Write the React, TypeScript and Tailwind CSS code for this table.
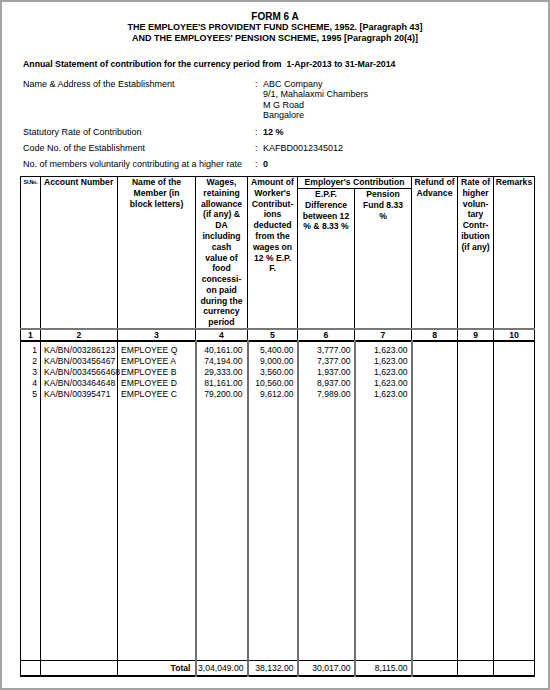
const rows = [
  ['1', 'KA/BN/003286123', 'EMPLOYEE Q', '40,161.00', '5,400.00', '3,777.00', '1,623.00'],
  ['2', 'KA/BN/003456467', 'EMPLOYEE A', '74,194.00', '9,000.00', '7,377.00', '1,623.00'],
  ['3', 'KA/BN/0034566468', 'EMPLOYEE B', '29,333.00', '3,560.00', '1,937.00', '1,623.00'],
  ['4', 'KA/BN/003464648', 'EMPLOYEE D', '81,161.00', '10,560.00', '8,937.00', '1,623.00'],
  ['5', 'KA/BN/00395471', 'EMPLOYEE C', '79,200.00', '9,612.00', '7,989.00', '1,623.00'],
]

const widths = [20, 77, 78, 52, 50, 57, 57, 46, 36, 41]

function Lines({ items }: { items: string[] }) {
  return (
    <>
      {items.map((t, i) => (
        <div key={i} className="whitespace-nowrap">{t}</div>
      ))}
    </>
  )
}

export default function App() {
  const th = 'border border-black align-top text-center p-0 font-bold'
  const td = 'border-x border-black p-0 whitespace-nowrap'
  const num = 'border-x-2 border-x-[#6f6f6f]'

  return (
    <div className="w-[550px] h-[690px] border-2 border-[#a3a3a3] bg-white text-black font-['Liberation_Sans',Arial,sans-serif]">
      <div className="pt-[9px] text-center font-bold">
        <div className="text-[10px] leading-[11px]">FORM 6 A</div>
        <div className="text-[9px] leading-[10.5px]">THE EMPLOYEE'S PROVIDENT FUND SCHEME, 1952. [Paragraph 43]</div>
        <div className="text-[9px] leading-[10.5px]">AND THE EMPLOYEES' PENSION SCHEME, 1995 [Paragraph 20(4)]</div>
      </div>

      <div className="mt-[16px] pl-[21px] text-[8.75px] leading-[11px] font-bold">
        Annual Statement of contribution for the currency period from&nbsp; 1-Apr-2013 to 31-Mar-2014
      </div>

      <div className="mt-[9px] pl-[21px] text-[9px]">
        <div className="flex leading-[10.3px]">
          <div className="w-[232px]">Name &amp; Address of the Establishment</div>
          <div className="w-[8px]">:</div>
          <div>
            <div>ABC Company</div>
            <div>9/1, Mahalaxmi Chambers</div>
            <div>M G Road</div>
            <div>Bangalore</div>
          </div>
        </div>
        <div className="mt-[4px] flex leading-[16px]">
          <div className="w-[232px]">Statutory Rate of Contribution</div>
          <div className="w-[8px]">:</div>
          <div className="font-bold">12 %</div>
        </div>
        <div className="flex leading-[16px]">
          <div className="w-[232px]">Code No. of the Establishment</div>
          <div className="w-[8px]">:</div>
          <div>KAFBD0012345012</div>
        </div>
        <div className="flex leading-[16px]">
          <div className="w-[232px]">No. of members voluntarily contributing at a higher rate</div>
          <div className="w-[8px]">:</div>
          <div className="font-bold">0</div>
        </div>
      </div>

      <table className="mt-[4px] ml-[18px] w-[514px] table-fixed border-collapse text-[8.6px]">
        <colgroup>
          {widths.map((w, i) => (
            <col key={i} style={{ width: w }} />
          ))}
        </colgroup>
        <thead className="leading-[10.77px]">
          <tr className="h-[11px]">
            <th rowSpan={2} className={th}>
              <div className="text-[5.5px] tracking-[-0.3px] leading-[10.77px]">Sl.No.</div>
            </th>
            <th rowSpan={2} className={`${th} text-left pl-[3px]`}>Account Number</th>
            <th rowSpan={2} className={th}>
              <Lines items={['Name of the', 'Member (in', 'block letters)']} />
            </th>
            <th rowSpan={2} className={th}>
              <Lines
                items={[
                  'Wages,',
                  'retaining',
                  'allowance',
                  '(if any) &',
                  'DA',
                  'including',
                  'cash',
                  'value of',
                  'food',
                  'concessi-',
                  'on paid',
                  'during the',
                  'currency',
                  'period',
                ]}
              />
            </th>
            <th rowSpan={2} className={th}>
              <Lines
                items={[
                  'Amount of',
                  "Worker's",
                  'Contribut-',
                  'ions',
                  'deducted',
                  'from the',
                  'wages on',
                  '12 % E.P.',
                  'F.',
                ]}
              />
            </th>
            <th colSpan={2} className={th}>Employer's Contribution</th>
            <th rowSpan={2} className={th}>
              <Lines items={['Refund of', 'Advance']} />
            </th>
            <th rowSpan={2} className={th}>
              <Lines items={['Rate of', 'higher', 'volun-', 'tary', 'Contr-', 'ibution', '(if any)']} />
            </th>
            <th rowSpan={2} className={th}>Remarks</th>
          </tr>
          <tr className="h-[139px]">
            <th className={th}>
              <Lines items={['E.P.F.', 'Difference', 'between 12', '% & 8.33 %']} />
            </th>
            <th className={th}>
              <Lines items={['Pension', 'Fund 8.33', '%']} />
            </th>
          </tr>
          <tr className="h-[12px] border-t-2 border-t-[#777] border-b-2 border-b-black">
            {widths.map((_, i) => (
              <th key={i} className="border-x border-black p-0 text-center font-bold leading-[10px]">
                {i + 1}
              </th>
            ))}
          </tr>
        </thead>
        <tbody className="leading-[11px]">
          {rows.map((r, i) => (
            <tr key={r[0]} className={i === 0 ? 'h-[14px]' : 'h-[11px]'}>
              <td className={`${td} text-right pr-[3px] ${i === 0 ? 'pt-[3px]' : ''}`}>{r[0]}</td>
              <td className={`${td} pl-[3px] ${i === 0 ? 'pt-[3px]' : ''}`}>{r[1]}</td>
              <td className={`${td} pl-[3px] ${i === 0 ? 'pt-[3px]' : ''}`}>{r[2]}</td>
              <td className={`${td} ${num} text-right pr-[4px] ${i === 0 ? 'pt-[3px]' : ''}`}>{r[3]}</td>
              <td className={`${td} ${num} text-right pr-[3px] ${i === 0 ? 'pt-[3px]' : ''}`}>{r[4]}</td>
              <td className={`${td} ${num} text-right pr-[3px] ${i === 0 ? 'pt-[3px]' : ''}`}>{r[5]}</td>
              <td className={`${td} ${num} text-right pr-[3px] ${i === 0 ? 'pt-[3px]' : ''}`}>{r[6]}</td>
              <td className={td}></td>
              <td className={td}></td>
              <td className={td}></td>
            </tr>
          ))}
          <tr className="h-[261px]">
            <td className={td}></td>
            <td className={td}></td>
            <td className={td}></td>
            <td className={`${td} ${num}`}></td>
            <td className={`${td} ${num}`}></td>
            <td className={`${td} ${num}`}></td>
            <td className={`${td} ${num}`}></td>
            <td className={td}></td>
            <td className={td}></td>
            <td className={td}></td>
          </tr>
          <tr className="h-[15px] border-t border-t-black border-b-2 border-b-black">
            <td className={td}></td>
            <td className={td}></td>
            <td className={`${td} text-right pr-[4px] font-bold`}>Total</td>
            <td className={`${td} ${num} text-right pr-[3px]`}>3,04,049.00</td>
            <td className={`${td} ${num} text-right pr-[3px]`}>38,132.00</td>
            <td className={`${td} ${num} text-right pr-[3px]`}>30,017.00</td>
            <td className={`${td} ${num} text-right pr-[3px]`}>8,115.00</td>
            <td className={td}></td>
            <td className={td}></td>
            <td className={td}></td>
          </tr>
        </tbody>
      </table>
    </div>
  )
}
